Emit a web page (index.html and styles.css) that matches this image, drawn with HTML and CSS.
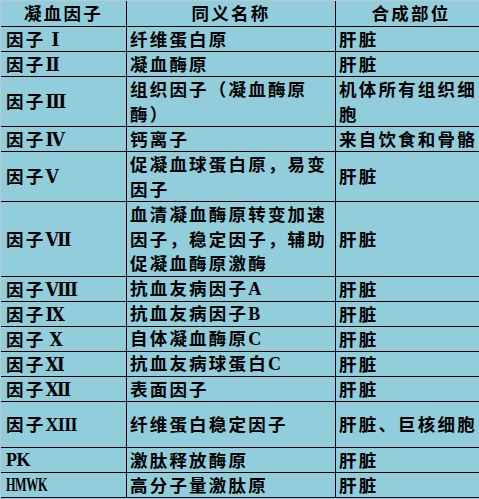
FILE: index.html
```html
<!DOCTYPE html>
<html lang="zh-CN">
<head>
<meta charset="utf-8">
<title>凝血因子</title>
<link rel="stylesheet" href="styles.css">
</head>
<body>
<div class="sheet">
  <div class="row"><div class="c c1 hd"><span>凝血因子</span></div><div class="c c2 hd"><span>同义名称</span></div><div class="c c3 hd"><span>合成部位</span></div></div>
  <div class="row"><div class="c c1"><span>因子<span class="rn rn-one">Ⅰ</span></span></div><div class="c c2"><span>纤维蛋白原</span></div><div class="c c3"><span>肝脏</span></div></div>
  <div class="row"><div class="c c1"><span>因子<span class="rn">Ⅱ</span></span></div><div class="c c2"><span>凝血酶原</span></div><div class="c c3"><span>肝脏</span></div></div>
  <div class="row"><div class="c c1"><span>因子<span class="rn">Ⅲ</span></span></div><div class="c c2"><span>组织因子（凝血酶原<br>酶）</span></div><div class="c c3"><span>机体所有组织细<br>胞</span></div></div>
  <div class="row"><div class="c c1"><span>因子<span class="rn">Ⅳ</span></span></div><div class="c c2"><span>钙离子</span></div><div class="c c3"><span>来自饮食和骨骼</span></div></div>
  <div class="row"><div class="c c1"><span>因子<span class="rn">Ⅴ</span></span></div><div class="c c2"><span>促凝血球蛋白原，易变<br>因子</span></div><div class="c c3"><span>肝脏</span></div></div>
  <div class="row"><div class="c c1"><span>因子<span class="rn">Ⅶ</span></span></div><div class="c c2"><span>血清凝血酶原转变加速<br>因子，稳定因子，辅助<br>促凝血酶原激酶</span></div><div class="c c3"><span>肝脏</span></div></div>
  <div class="row"><div class="c c1"><span>因子<span class="rn">Ⅷ</span></span></div><div class="c c2"><span>抗血友病因子<span class="lat">A</span></span></div><div class="c c3"><span>肝脏</span></div></div>
  <div class="row"><div class="c c1"><span>因子<span class="rn">Ⅸ</span></span></div><div class="c c2"><span>抗血友病因子<span class="lat">B</span></span></div><div class="c c3"><span>肝脏</span></div></div>
  <div class="row"><div class="c c1"><span>因子<span class="rn rn-ten">Ⅹ</span></span></div><div class="c c2"><span>自体凝血酶原<span class="lat">C</span></span></div><div class="c c3"><span>肝脏</span></div></div>
  <div class="row"><div class="c c1"><span>因子<span class="rn">Ⅺ</span></span></div><div class="c c2"><span>抗血友病球蛋白<span class="lat">C</span></span></div><div class="c c3"><span>肝脏</span></div></div>
  <div class="row"><div class="c c1"><span>因子<span class="rn">Ⅻ</span></span></div><div class="c c2"><span>表面因子</span></div><div class="c c3"><span>肝脏</span></div></div>
  <div class="row"><div class="c c1"><span>因子<span class="lat">XIII</span></span></div><div class="c c2"><span>纤维蛋白稳定因子</span></div><div class="c c3"><span>肝脏、巨核细胞</span></div></div>
  <div class="row"><div class="c c1"><span class="lat">PK</span></div><div class="c c2"><span>激肽释放酶原</span></div><div class="c c3"><span>肝脏</span></div></div>
  <div class="row"><div class="c c1"><span class="lat lat-narrow">HMWK</span></div><div class="c c2"><span>高分子量激肽原</span></div><div class="c c3"><span>肝脏</span></div></div>
</div>
</body>
</html>
```

FILE: styles.css
```css
html, body {
  margin: 0;
  padding: 0;
  background: #92cddc;
  overflow: hidden;
}

.sheet {
  display: grid;
  grid-template-columns: 125px 208px 150px;
  grid-template-rows: 25px 24px 24px 49px 24px 49px 74px 24px 24px 24px 24px 24px 45px 24px 24px;
  gap: 1px;
  width: 486px;
  background: #000;
  border-top: 1px solid #b9c9d2;
  border-left: 1px solid #b9c9d2;
  padding-bottom: 1px;
  font-family: "Noto Sans CJK SC", sans-serif;
  font-size: 17.5px;
  font-weight: 700;
  letter-spacing: 2.2px;
  color: #000;
}

.row {
  display: contents;
}

.c {
  background: #92cddc;
  display: flex;
  align-items: center;
  white-space: nowrap;
  line-height: 24.7px;
  padding-left: 3px;
  min-height: 0;
}

.c1 {
  padding-left: 5px;
}

.hd {
  justify-content: center;
  padding-left: 0;
}

.lat {
  font-family: "Liberation Serif", serif;
  font-weight: 700;
  font-size: 18px;
  letter-spacing: -0.6px;
}

.lat-narrow {
  display: inline-block;
  transform: scaleX(0.68);
  transform-origin: left center;
}

.rn {
  font-family: "DejaVu Serif", "Liberation Serif", serif;
  font-stretch: condensed;
  font-weight: 700;
  font-size: 19px;
  letter-spacing: 0;
}

.rn-one {
  margin-left: 6px;
}

.rn-ten {
  margin-left: 4px;
}
```
